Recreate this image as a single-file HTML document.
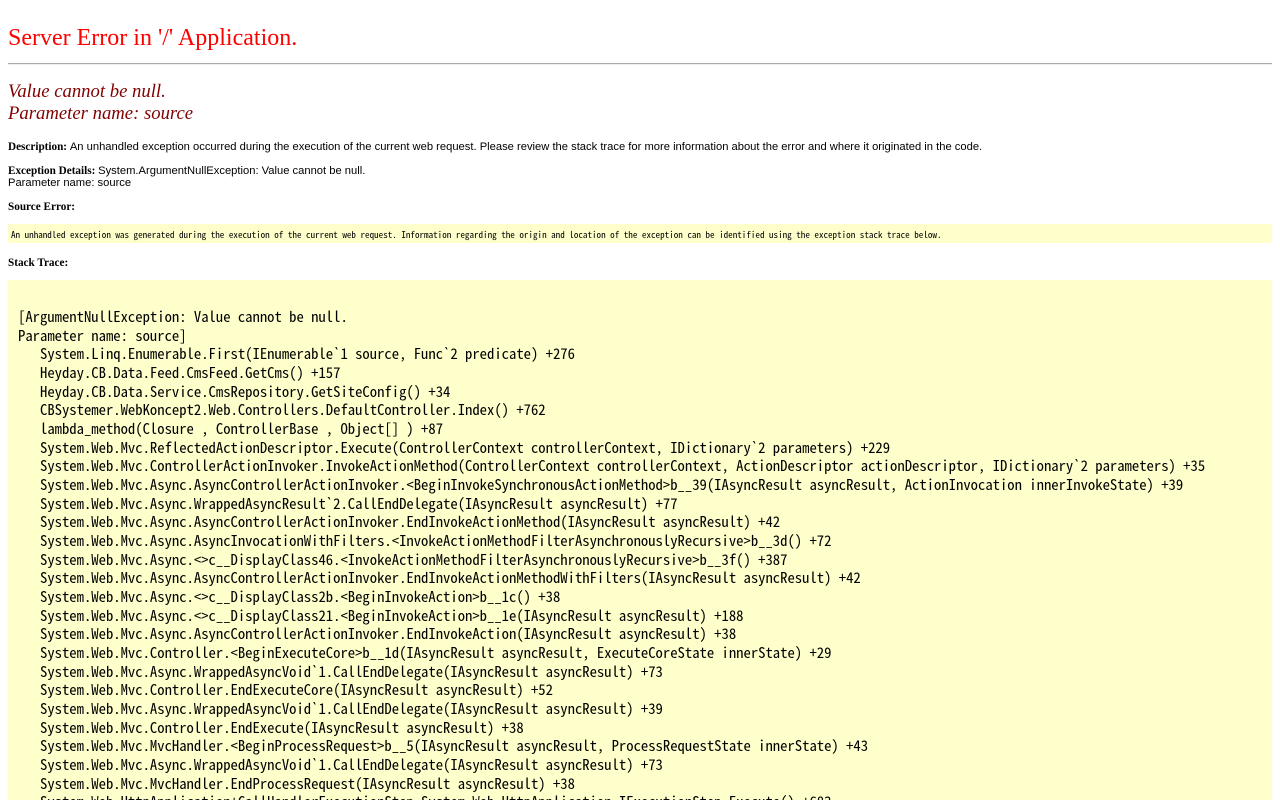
<!DOCTYPE html>
<html><head><meta charset="utf-8"><style>
html,body{height:800px;overflow:hidden;}
body{margin:0;background:#fff;font-family:"Liberation Sans",Arial,sans-serif;font-size:11.2px;color:#000;position:relative;}
.a{position:absolute;left:8px;white-space:nowrap;}
b{font-family:"Liberation Serif",serif;font-weight:bold;}
h1{font-family:"Liberation Serif",serif;font-weight:normal;font-size:24px;color:red;margin:0;}
h2{font-family:"Liberation Serif",serif;font-weight:normal;font-style:italic;font-size:18.7px;color:maroon;margin:0;line-height:22px;}
.mono{font-family:"Noto Sans Mono CJK SC","Noto Sans Mono CJK JP","Liberation Mono",monospace;}
pre{margin:0;}
</style></head><body>
<div class="a" style="top:25px"><h1>Server Error in '/' Application.</h1></div>
<div style="position:absolute;left:8px;right:8px;top:63px;height:0;border-top:1px solid #aaa;border-bottom:1px solid #eee"></div>
<div class="a" style="top:81px"><h2>Value cannot be null.<br>Parameter name: source</h2></div>
<div class="a" style="top:141px"><b>Description: </b>An unhandled exception occurred during the execution of the current web request. Please review the stack trace for more information about the error and where it originated in the code.</div>
<div class="a" style="top:165px;line-height:12px"><b>Exception Details: </b>System.ArgumentNullException: Value cannot be null.<br>Parameter name: source</div>
<div class="a" style="top:201px"><b>Source Error:</b></div>
<div style="position:absolute;left:8px;right:8px;top:224px;height:19px;background:#ffffcc"></div>
<div class="a mono" style="top:228px;left:11px;font-size:9.08px;line-height:12px">An unhandled exception was generated during the execution of the current web request. Information regarding the origin and location of the exception can be identified using the exception stack trace below.</div>
<div class="a" style="top:257px"><b>Stack Trace:</b></div>
<div style="position:absolute;left:8px;right:8px;top:280px;height:520px;background:#ffffcc;overflow:hidden">
<pre class="mono" style="padding:0 10px;margin-top:28px;font-size:14.67px;line-height:18.67px">[ArgumentNullException: Value cannot be null.
Parameter name: source]
   System.Linq.Enumerable.First(IEnumerable`1 source, Func`2 predicate) +276
   Heyday.CB.Data.Feed.CmsFeed.GetCms() +157
   Heyday.CB.Data.Service.CmsRepository.GetSiteConfig() +34
   CBSystemer.WebKoncept2.Web.Controllers.DefaultController.Index() +762
   lambda_method(Closure , ControllerBase , Object[] ) +87
   System.Web.Mvc.ReflectedActionDescriptor.Execute(ControllerContext controllerContext, IDictionary`2 parameters) +229
   System.Web.Mvc.ControllerActionInvoker.InvokeActionMethod(ControllerContext controllerContext, ActionDescriptor actionDescriptor, IDictionary`2 parameters) +35
   System.Web.Mvc.Async.AsyncControllerActionInvoker.&lt;BeginInvokeSynchronousActionMethod&gt;b__39(IAsyncResult asyncResult, ActionInvocation innerInvokeState) +39
   System.Web.Mvc.Async.WrappedAsyncResult`2.CallEndDelegate(IAsyncResult asyncResult) +77
   System.Web.Mvc.Async.AsyncControllerActionInvoker.EndInvokeActionMethod(IAsyncResult asyncResult) +42
   System.Web.Mvc.Async.AsyncInvocationWithFilters.&lt;InvokeActionMethodFilterAsynchronouslyRecursive&gt;b__3d() +72
   System.Web.Mvc.Async.&lt;&gt;c__DisplayClass46.&lt;InvokeActionMethodFilterAsynchronouslyRecursive&gt;b__3f() +387
   System.Web.Mvc.Async.AsyncControllerActionInvoker.EndInvokeActionMethodWithFilters(IAsyncResult asyncResult) +42
   System.Web.Mvc.Async.&lt;&gt;c__DisplayClass2b.&lt;BeginInvokeAction&gt;b__1c() +38
   System.Web.Mvc.Async.&lt;&gt;c__DisplayClass21.&lt;BeginInvokeAction&gt;b__1e(IAsyncResult asyncResult) +188
   System.Web.Mvc.Async.AsyncControllerActionInvoker.EndInvokeAction(IAsyncResult asyncResult) +38
   System.Web.Mvc.Controller.&lt;BeginExecuteCore&gt;b__1d(IAsyncResult asyncResult, ExecuteCoreState innerState) +29
   System.Web.Mvc.Async.WrappedAsyncVoid`1.CallEndDelegate(IAsyncResult asyncResult) +73
   System.Web.Mvc.Controller.EndExecuteCore(IAsyncResult asyncResult) +52
   System.Web.Mvc.Async.WrappedAsyncVoid`1.CallEndDelegate(IAsyncResult asyncResult) +39
   System.Web.Mvc.Controller.EndExecute(IAsyncResult asyncResult) +38
   System.Web.Mvc.MvcHandler.&lt;BeginProcessRequest&gt;b__5(IAsyncResult asyncResult, ProcessRequestState innerState) +43
   System.Web.Mvc.Async.WrappedAsyncVoid`1.CallEndDelegate(IAsyncResult asyncResult) +73
   System.Web.Mvc.MvcHandler.EndProcessRequest(IAsyncResult asyncResult) +38
   System.Web.HttpApplication+CallHandlerExecutionStep.System.Web.HttpApplication.IExecutionStep.Execute() +683
</pre></div>
</body></html>
